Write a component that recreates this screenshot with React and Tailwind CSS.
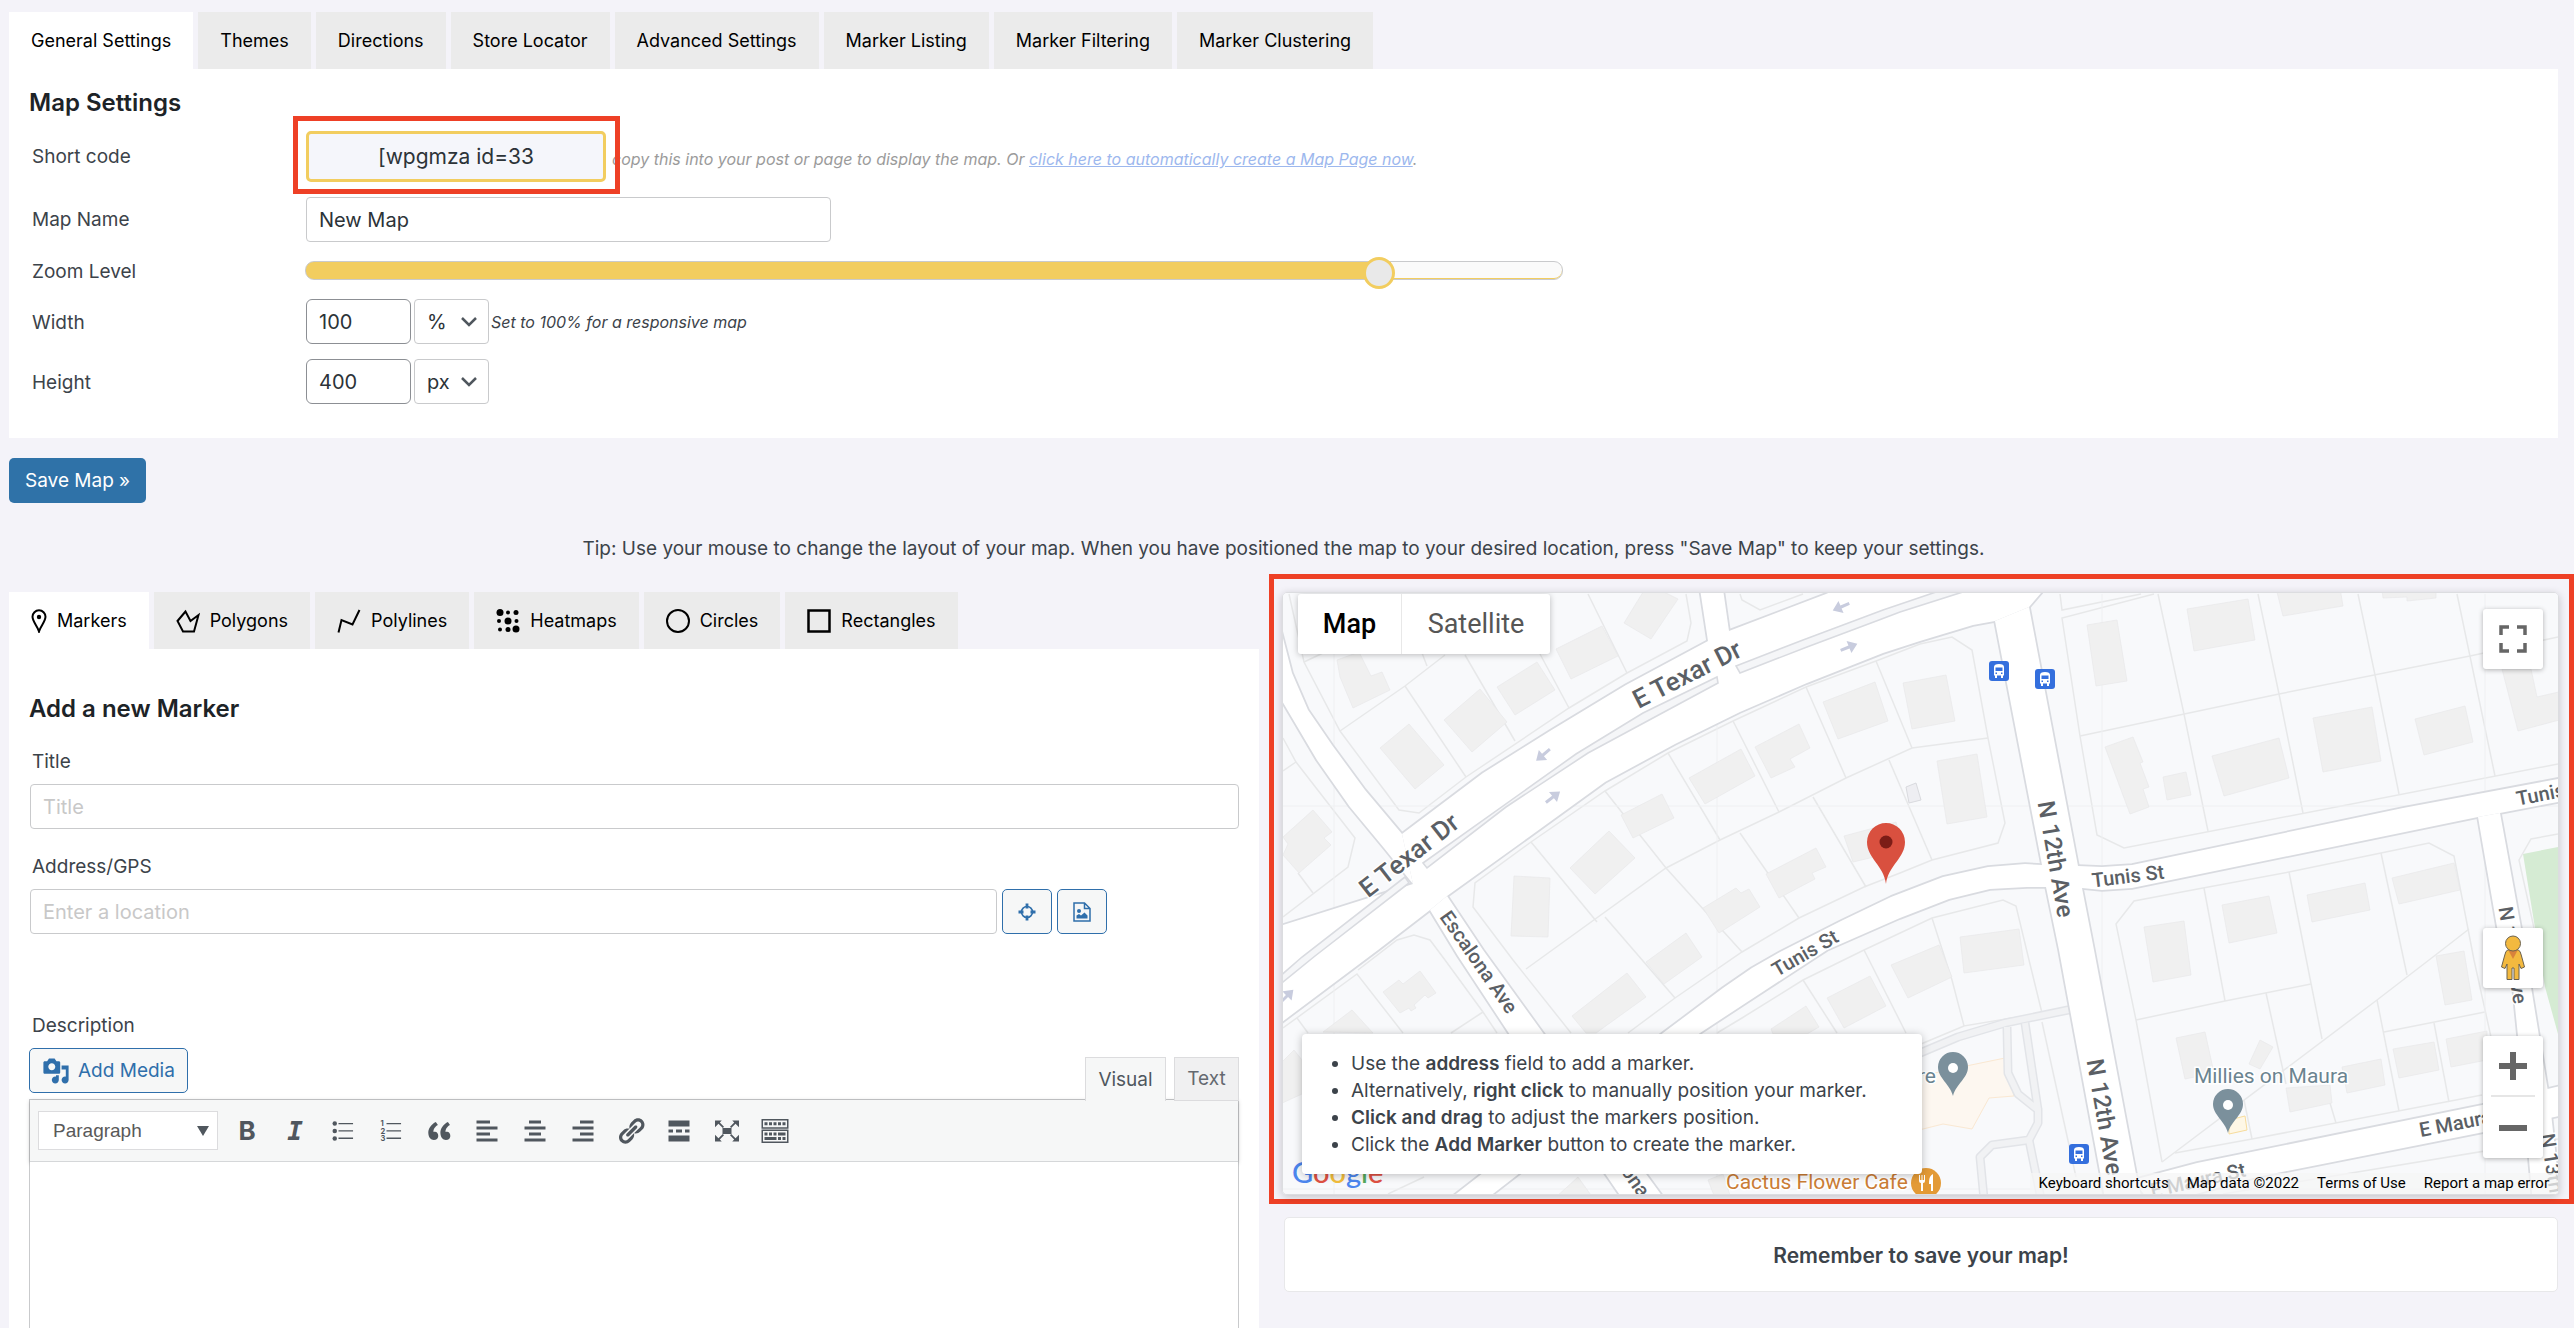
import React, { useState } from "react";

const settingsTabs = [
  "General Settings",
  "Themes",
  "Directions",
  "Store Locator",
  "Advanced Settings",
  "Marker Listing",
  "Marker Filtering",
  "Marker Clustering",
];

const inputClass =
  "h-[45px] rounded-[4px] border border-[#c9cacc] bg-white px-3 text-[20px] text-[#2c3338] outline-none placeholder:text-[#c8c8c8]";

const shapeIcons = {
  Markers: (
    <svg width="16" height="24" viewBox="0 0 16 24" fill="none" stroke="currentColor" strokeWidth="2">
      <path d="M8 22.5C6.5 17 1.5 12.5 1.5 7.8a6.5 6.5 0 0 1 13 0C14.500 12.500 9.500 17 8 22.500z" />
      <circle cx="8" cy="8" r="2.200" fill="currentColor" stroke="none" />
    </svg>
  ),
  Polygons: (
    <svg width="24" height="24" viewBox="0 0 24 24" fill="none" stroke="currentColor" strokeWidth="2">
      <path d="M9.500 2.500L1.500 12l5.500 10.500h11L22.500 6l-8 6z" />
    </svg>
  ),
  Polylines: (
    <svg width="24" height="24" viewBox="0 0 24 24" fill="none" stroke="currentColor" strokeWidth="2">
      <path d="M1.500 23.500L4.500 11l11 4.500L22.500 1" />
    </svg>
  ),
  Heatmaps: (
    <svg width="24" height="24" viewBox="0 0 24 24" fill="currentColor">
      <circle cx="4" cy="3.500" r="3.500" />
      <circle cx="12" cy="3.500" r="2" />
      <circle cx="20" cy="3.500" r="2.500" />
      <circle cx="3" cy="12" r="2" />
      <circle cx="12" cy="12" r="3.500" />
      <circle cx="20.500" cy="12" r="2" />
      <circle cx="4" cy="20.500" r="2" />
      <circle cx="12" cy="20.500" r="2.500" />
      <circle cx="20" cy="20" r="3.500" />
    </svg>
  ),
  Circles: (
    <svg width="24" height="24" viewBox="0 0 24 24" fill="none" stroke="currentColor" strokeWidth="2">
      <circle cx="12" cy="12" r="11" />
    </svg>
  ),
  Rectangles: (
    <svg width="24" height="24" viewBox="0 0 24 24" fill="none" stroke="currentColor" strokeWidth="2.500">
      <rect x="1.500" y="1.500" width="21" height="21" />
    </svg>
  ),
};

const toolbarButtons = [
  { label: "Bold", text: "B" },
  { label: "Italic", text: "I" },
  {
    label: "Bulleted list",
    icon: (
      <>
        <path d="M7 4.600h9.700v.9H7zM7 9.500h9.700v.9H7zM7 14.400h9.700v.9H7z" />
        <circle cx="4.500" cy="5" r="1.500" />
        <circle cx="4.500" cy="10" r="1.500" />
        <circle cx="4.500" cy="15" r="1.500" />
      </>
    ),
  },
  {
    label: "Numbered list",
    icon: (
      <>
        <path d="M7 4.600h9.700v.9H7zM7 9.500h9.700v.9H7zM7 14.400h9.700v.9H7z" />
        <g className="font-['Inter',sans-serif] text-[5px] font-bold">
          <text x="3" y="6.600">1</text>
          <text x="3" y="11.700">2</text>
          <text x="3" y="16.800">3</text>
        </g>
      </>
    ),
  },
  {
    label: "Blockquote",
    icon: (
      <path d="M9.490 13.220c0-.74-.2-1.380-.61-1.900-.62-.78-1.830-.88-2.530-.72-.29-1.650 1.110-3.750 2.920-4.650L7.880 4c-2.730 1.300-5.420 4.280-4.960 8.050C3.210 14.430 4.590 16 6.540 16c.85 0 1.560-.25 2.120-.75s.83-1.180.83-2.030zm8.050 0c0-.74-.2-1.380-.61-1.900-.63-.78-1.830-.88-2.530-.72-.29-1.650 1.110-3.750 2.920-4.650L15.930 4c-2.730 1.300-5.410 4.280-4.950 8.050.29 2.380 1.660 3.950 3.610 3.950.85 0 1.560-.25 2.120-.75s.83-1.180.83-2.030z" />
    ),
  },
  { label: "Align left", icon: <path d="M12 5V3H3v2h9zm5 4V7H3v2h14zm-5 4v-2H3v2h9zm5 4v-2H3v2h14z" /> },
  { label: "Align center", icon: <path d="M14 5V3H6v2h8zm3 4V7H3v2h14zm-3 4v-2H6v2h8zm3 4v-2H3v2h14z" /> },
  { label: "Align right", icon: <path d="M17 5V3H8v2h9zm0 4V7H3v2h14zm0 4v-2H8v2h9zm0 4v-2H3v2h14z" /> },
  {
    label: "Insert link",
    icon: (
      <path d="M17.740 2.760c1.680 1.690 1.680 4.410 0 6.100l-1.530 1.520c-1.120 1.120-2.700 1.470-4.140 1.090l2.620-2.610.76-.77.76-.76c.84-.84.84-2.200 0-3.040-.84-.85-2.200-.85-3.040 0l-.77.76-3.380 3.380c-.37-1.440-.02-3.020 1.100-4.140l1.520-1.530c1.690-1.680 4.420-1.680 6.100 0zM8.590 13.430l5.340-5.340c.42-.42.42-1.100 0-1.520-.44-.43-1.130-.39-1.530 0l-5.330 5.340c-.42.42-.42 1.100 0 1.520.44.43 1.130.39 1.520 0zm-.76 2.290l4.140-4.150c.38 1.440.03 3.020-1.090 4.140l-1.520 1.530c-1.690 1.680-4.410 1.680-6.100 0-1.680-1.680-1.680-4.420 0-6.100l1.530-1.520c1.120-1.120 2.700-1.470 4.140-1.100l-4.140 4.150c-.85.84-.85 2.200 0 3.050.84.84 2.200.84 3.040 0z" />
    ),
  },
  { label: "Read more", icon: <path d="M17 7V3H3v4h14zM6 11V9H3v2h3zm6 0V9H8v2h4zm5 0V9h-3v2h3zm0 6v-4H3v4h14z" /> },
  {
    label: "Fullscreen",
    icon: (
      <path d="M7 8h6v4H7zM2 3h4.500L5.200 4.300 8 7.200l-.8.8-2.900-2.900L2 7.500zM18 3h-4.500l1.300 1.300L12 7.200l.8.8 2.900-2.900L18 7.500zM2 17h4.500l-1.300-1.300L8 12.800l-.8-.8-2.900 2.900L2 12.500zM18 17h-4.500l1.300-1.300-2.800-2.900.8-.8 2.900 2.900 2.300-2.400z" />
    ),
  },
  {
    label: "Toolbar toggle",
    icon: (
      <path
        fillRule="evenodd"
        d="M1 2h18v6.500H1zM2 3v4.500h16V3zM1 9h18v9H1zM2 10v7h16v-7zM3 4.200h2v2H3zM6 4.200h2v2H6zM9 4.200h2v2H9zM12 4.200h2v2h-2zM15 4.200h2v2h-2zM3 11h2v2H3zM6 11h2v2H6zM9 11h2v2H9zM12 11h5v2h-5zM3 14h8v2H3zM12 14h2v2h-2zM15 14h2v2h-2z"
      />
    ),
  },
];

const roads = [
  // E Texar Dr
  "0,331 130,290 119,240 200,179 267,137 343,91 425,47 446,37 543,0 600,-25 770,-15 746,13 712,27 690,31 637,47 600,59 524,89 457,118 392,150 322,188 246,243 164,302 147,316 95,356 -5,431",
  "-5,100 34,166 67,213 101,254 130,290 119,240 82,196 49,151 25,116 9,79 -5,25",
  "417,-5 425,47 440,60 446,37 440,-5",
  // Escalona Ave
  "147,316 175,362 233,450 343,610 385,610 260,439 200,356 164,302",
  // N 12th Ave
  "712,27 759,271 763,293 776,356 823,610 860,610 853,580 811,356 799,294 795,272 746,13",
  // Tunis St
  "1285,183 1120,214 849,271 819,273 795,272 759,271 742,270 705,273 660,283 608,303 558,327 497,358 469,374 440,394 380,439 160,610 197,610 417,439 478,399 544,356 617,324 666,305 707,295 744,293 763,293 799,294 819,296 849,294 1195,223 1217,219 1285,206",
  // E Maura St
  "850,586 914,569 1199,511 1285,490 1285,520 1201,538 974,583 870,612",
  // N 13th Ave
  "1195,223 1214,333 1230,393 1235,442 1250,610 1278,610 1267,510 1256,442 1248,393 1238,334 1217,219",
];

const medians = [
  "140,269 293,160 360,119 434,83 435,89 305,159 223,213 144,274",
  "453,72 520,46 600,16 656,-3 683,-3 617,18 596,26 524,53 457,79",
  "122,283 19,363 -5,384 -5,392 32,362 126,289",
];

const parcels = [
  "6,0 21,68 57,137 116,216 136,219 183,183 286,114 344,79 404,47 408,29 403,0",
  "21,68 40,59",
  "57,137 122,92 162,61",
  "122,92 183,183",
  "139,59 144,72",
  "182,61 232,147",
  "257,60 286,114",
  "305,0 344,79",
  "0,144 13,168 72,244 65,273 0,323",
  "13,168 0,177",
  "15,279 30,299",
  "457,0 459,6 477,16 520,0",
  "288,439 230,366 190,313 192,289 248,248 322,197 385,159 450,127 523,93 593,67 637,50 669,43 689,56 705,144 722,229 715,249 649,266 617,279 581,293 516,324 459,358 392,404 345,439",
  "248,248 314,328",
  "243,375 383,274 437,246 496,218 563,184 629,154 705,144",
  "322,197 383,274 459,358",
  "385,159 437,246",
  "450,127 496,218",
  "523,93 563,184",
  "593,67 629,154",
  "530,203 583,293",
  "457,239 516,324",
  "322,323 392,404",
  "606,166 649,266",
  "75,376 114,346 131,341 147,346 162,366 200,418 214,439",
  "0,434 74,380 120,439",
  "200,418 168,439",
  "14,424 25,439",
  "434,439 459,424 520,386 581,356 649,324 720,306 733,312 746,366 759,419 681,432 669,386 649,324",
  "759,428 793,583",
  "581,356 623,439",
  "520,386 554,439",
  "681,432 638,450",
  "141,583 105,600",
  "777,0 779,16 858,0",
  "871,0 779,24 797,142 814,241 841,254 1275,170",
  "797,142 996,100 1187,62 1275,43",
  "875,0 901,120 925,237",
  "975,0 996,100 1020,219",
  "1075,0 1092,81 1116,200",
  "1174,0 1212,182",
  "879,568 853,426 833,330 851,307 920,294 1006,278 1098,259 1146,249 1171,262 1191,366 1208,443",
  "879,568 1094,406 1159,356 1186,335",
  "853,426 942,407 1028,390",
  "921,294 942,407",
  "1006,278 1039,445",
  "1098,259 1124,381",
  "983,399 1003,490",
  "1047,509 1053,529",
  "1094,406 1116,517",
  "1101,438 1202,418",
  "1151,429 1166,508",
  "892,559 969,545 1199,501",
  "961,506 969,545",
  "1275,240 1248,245 1236,266 1251,334",
  "940,600 1275,545",
];

const buildings = [
  "365,-10 395,5 368,45 341,29",
  "273,55 319,32 335,62 288,85",
  "214,93 254,68 272,96 232,121",
  "161,126 197,95 224,128 189,158",
  "97,154 126,130 161,171 132,195",
  "54,66 76,58 88,82 99,78 107,96 70,114 57,83",
  "0,243 30,216 49,238 41,244 48,251 16,279 0,261 5,250",
  "231,282 267,284 265,343 228,342",
  "287,274 326,237 352,264 312,300",
  "338,221 379,200 391,224 350,244",
  "406,184 458,155 472,182 422,210",
  "472,153 516,130 527,154 507,165 512,173 488,184",
  "540,108 592,88 605,127 555,145",
  "620,89 663,81 672,127 629,135",
  "654,167 694,160 704,223 664,230",
  "561,242 613,228 621,256 570,268",
  "483,280 533,254 543,273 529,279 532,285 496,304",
  "420,314 453,294 458,299 466,295 477,313 436,339",
  "363,368 403,339 419,363 381,390",
  "289,422 344,379 363,403 313,439 303,439",
  "100,398 116,386 120,390 137,377 153,399 145,404 142,401 131,411 133,414 128,417 126,414 117,419",
  "40,438 69,416 90,439",
  "488,435 523,412 536,433 524,440 490,440",
  "544,404 587,382 603,412 561,434",
  "608,371 656,351 669,383 625,404",
  "677,343 736,335 741,371 681,379",
  "804,31 834,26 844,87 813,92",
  "904,15 965,5 972,46 911,57",
  "993,-6 1057,-6 1060,12 1000,22",
  "1099,-4 1153,-4 1153,4 1124,7 1124,3 1100,4",
  "822,153 850,143 860,168 857,169 866,193 860,195 866,213 847,220",
  "880,183 903,178 908,201 884,206",
  "929,162 996,144 1006,184 941,202",
  "1030,124 1089,113 1098,167 1040,178",
  "1132,125 1182,112 1190,148 1141,161",
  "1219,75 1248,75 1254,103 1280,97 1280,125 1235,137",
  "861,333 901,327 908,381 870,388",
  "939,311 986,302 994,339 946,349",
  "1024,301 1082,289 1087,316 1029,328",
  "1109,284 1171,269 1177,296 1116,310",
  "1153,362 1181,357 1189,406 1162,411",
  "893,444 922,438 931,479 902,485",
  "977,446 990,453 977,475 966,470",
  "1003,494 1047,491 1049,509 1007,518",
  "1059,473 1098,465 1102,491 1064,499",
  "1110,455 1151,448 1156,476 1116,484",
  "1163,445 1204,437 1204,466 1168,473",
  "272,604 295,583 310,604",
  "425,586 440,580 448,604 432,604",
  "-3,470 11,456 19,466 19,500 -3,510",
];

const driveways = [
  "630,462 675,443 722,429 790,415",
  "724,433 725,479 735,500 755,516 755,529 746,546 709,551 697,563 701,605",
  "742,429 755,516",
  "746,546 758,605",
];

const arrows = [
  "translate(260 161) rotate(140)",
  "translate(270 203) rotate(-38)",
  "translate(558 13) rotate(157)",
  "translate(566 53) rotate(-22)",
  "translate(4 402) rotate(-45)",
];

const busStops = ["translate(706 67)", "translate(752 75)", "translate(786 550)"];

const roadLabels = [
  { text: "E Texar Dr", at: "translate(126 261) rotate(-38)", size: "text-[26px]" },
  { text: "E Texar Dr", at: "translate(404 80) rotate(-27)", size: "text-[26px]" },
  { text: "N 12th Ave", at: "translate(773 265) rotate(80)", size: "text-[24px]" },
  { text: "N 12th Ave", at: "translate(822 523) rotate(80)", size: "text-[24px]" },
  { text: "Tunis St", at: "translate(845 282) rotate(-7)", size: "text-[20px]" },
  { text: "Tunis St", at: "translate(522 359) rotate(-30)", size: "text-[20px]" },
  { text: "Tunis St", at: "translate(1269 198) rotate(-11)", size: "text-[20px]" },
  { text: "Escalona Ave", at: "translate(196 368) rotate(55)", size: "text-[20px]" },
  { text: "Escalona Ave", at: "translate(350 583) rotate(55)", size: "text-[20px]" },
  { text: "E Maura St", at: "translate(1184 527) rotate(-11)", size: "text-[20px]" },
  { text: "E Maura St", at: "translate(915 586) rotate(-13)", size: "text-[20px]" },
  { text: "N 13th Ave", at: "translate(1230 361) rotate(81)", size: "text-[20px]" },
  { text: "N 13th Ave", at: "translate(1272 588) rotate(81)", size: "text-[20px]" },
];

function PlacePin({ at }) {
  return (
    <g transform={at}>
      <path d="M0 0C-3-12-15-18-15-29a15 15 0 0 1 30 0C15-18 3-12 0 0z" fill="#7b909c" />
      <circle cy="-28" r="5" fill="#fff" />
    </g>
  );
}

function StreetMap() {
  return (
    <svg
      className="block h-full w-full font-['Roboto',sans-serif]"
      viewBox="0 -1 1275 601"
      preserveAspectRatio="xMidYMid slice"
      role="img"
      aria-label="Street map"
    >
      <rect y="-1" width="1275" height="601" fill="#f8f9fb" />
      <polygon points="1240,260 1285,251 1285,476 1262,393 1252,334" fill="#d5ebd3" />
      <polygon points="620,486 688,471 722,464 731,502 706,504 689,535 660,530 620,540" fill="#fdf7f0" stroke="#fae8d2" />
      {parcels.map((points) => (
        <polyline key={points} points={points} fill="none" stroke="#e7e8e9" strokeWidth="1.500" />
      ))}
      <path d="M51 0v600M434 0v600M819 0v600M1202 0v600M0 212h1275M0 595h1275" stroke="#eff0f2" />
      {buildings.map((points) => (
        <polygon key={points} points={points} fill="#f0f0f0" stroke="#e8e8e9" strokeWidth="0.700" />
      ))}
      <polygon points="623,193 633,189 638,206 626,209" fill="#eeeef2" stroke="#d9dade" />
      <polygon points="946,526 962,522 964,536 946,540" fill="#fef7e6" stroke="#f7dc9c" />

      <g fill="none" strokeLinejoin="round">
        {driveways.map((points) => (
          <polyline key={points} points={points} stroke="#e2e4e8" strokeWidth="9" />
        ))}
        {driveways.map((points) => (
          <polyline key={points} points={points} stroke="#f1f2f4" strokeWidth="6" />
        ))}
      </g>

      {/* road casing first, then the fills, so that the crossings merge */}
      {roads.map((points) => (
        <polygon key={points} points={points} fill="none" stroke="#d9dbe0" strokeWidth="3.500" strokeLinejoin="round" />
      ))}
      {roads.map((points) => (
        <polygon key={points} points={points} fill="#fff" />
      ))}
      {medians.map((points) => (
        <polygon key={points} points={points} fill="#f5f6f8" stroke="#d9dbe0" strokeWidth="1.600" />
      ))}
      {arrows.map((at) => (
        <path key={at} transform={at} d="M-9-1.500H0v-5L9 0 0 6.500v-5h-9z" fill="#c8ccde" />
      ))}

      {busStops.map((at) => (
        <g key={at} transform={at}>
          <rect width="20" height="20" rx="3" fill="#346fdd" />
          <path
            fillRule="evenodd"
            d="M5 6q0-3 5-3t5 3v8.500h-1V17h-2v-2.500H8V17H6v-2.500H5zM6.500 6.500v3.500h7V6.500zM6.500 11.500v1.500H8v-1.500zM12 11.500v1.500h1.500v-1.500z"
            fill="#fff"
          />
        </g>
      ))}

      <g fill="#5b5f65" fontWeight="500" textAnchor="middle" stroke="#fff" strokeWidth="3" paintOrder="stroke">
        {roadLabels.map(({ text, at, size }) => (
          <text key={at} transform={at} dy="0.350em" className={size}>
            {text}
          </text>
        ))}
      </g>

      <g className="text-[21px]" stroke="#fff" strokeWidth="3" paintOrder="stroke">
        <text x="988" y="489" textAnchor="middle" fill="#6b8490">
          Millies on Maura
        </text>
        <text x="653" y="489" textAnchor="end" fill="#6b8490">
          re
        </text>
        <text x="443" y="595" fill="#cb7d35">
          Cactus Flower Cafe
        </text>
      </g>
      <PlacePin at="translate(670 502)" />
      <PlacePin at="translate(945 539)" />
      <circle cx="643" cy="589" r="15" fill="#e39a36" />
      <path
        d="M636 581v6q0 2 2 2v8h2v-8q2 0 2-2v-6h-1v5h-1.500v-5h-1v5H637v-5zM650 580q-4 2-4 8v2h2v7h2z"
        fill="#fff"
      />

      <path d="M603 290C601 272 584 264 584 248a19 19 0 0 1 38 0C622 264 605 272 603 290z" fill="#d9503f" />
      <circle cx="603" cy="248" r="6.500" fill="#7c1d17" />
    </svg>
  );
}

function Chevron() {
  return (
    <svg
      className="pointer-events-none absolute top-[16px] right-3 text-[#50575e]"
      width="16"
      height="14"
      viewBox="0 0 16 14"
      fill="none"
      stroke="currentColor"
      strokeWidth="2.500"
    >
      <path d="M1 3l7 7 7-7" />
    </svg>
  );
}

function SizeField({ id, label, value, unit, children }) {
  return (
    <div className="flex items-center">
      <label htmlFor={id} className="w-[277px] pt-[2px] pl-[3px]">
        {label}
      </label>
      <input
        id={id}
        defaultValue={value}
        className="mr-[3px] h-[45px] w-[105px] rounded-[6px] border border-[#8c8f94] bg-white px-3 text-[20px] text-[#2c3338]"
      />
      <div className="relative">
        <select
          aria-label={`${label} unit`}
          defaultValue={unit}
          className="h-[45px] w-[75px] appearance-none rounded-[4px] border border-[#c9cacc] bg-white pl-3 text-[20px] text-[#2c3338]"
        >
          <option>px</option>
          <option>%</option>
        </select>
        <Chevron />
      </div>
      {children}
    </div>
  );
}

function MapSettings() {
  const [zoom, setZoom] = useState(19);
  const filled = (zoom / 22) * 100;

  return (
    <section className="mr-4 bg-white pt-[17px] pb-[34px] pl-5">
      <h2 className="h-[30px] text-[24px] leading-[33px] font-semibold text-[#1d2327]">Map Settings</h2>
      <div className="flex items-center">
        <label htmlFor="shortcode" className="w-[264px] pt-1 pl-[3px]">
          Short code
        </label>
        <div className="relative border-[5px] border-[#ee4026] pt-[10px] pr-[9px] pb-[7px] pl-2">
          <input
            id="shortcode"
            readOnly
            value="[wpgmza id=33"
            className="block h-[51px] w-[300px] rounded-[5px] border-3 border-[#f2cd5f] bg-[#f5f6fb] text-center text-[21px] text-[#2c3338] outline-none"
          />
        </div>
        <p className="-ml-2 pt-2 text-[16px] text-[#9b9b9b] italic">
          copy this into your post or page to display the map. Or{" "}
          <a href="#create" className="text-[#9db8ee] underline">
            click here to automatically create a Map Page now
          </a>
          .
        </p>
      </div>
      <div className="mt-[3px] flex items-center">
        <label htmlFor="map-name" className="w-[277px] pt-px pl-[3px]">
          Map Name
        </label>
        <input id="map-name" defaultValue="New Map" className={`${inputClass} w-[525px]`} />
      </div>
      <div className="mt-[19px] flex h-[19px] items-center pr-[50px]">
        <label htmlFor="zoom" className="w-[276px] shrink-0 pt-[2px] pl-[3px]">
          Zoom Level
        </label>
        <input
          id="zoom"
          type="range"
          min="0"
          max="22"
          value={zoom}
          onChange={(e) => setZoom(Number(e.target.value))}
          className="h-[19px] w-full max-w-[1258px] appearance-none rounded-[9px] border border-[#c9cacc] shadow-[inset_0_-1px_0_#f2cd5f] [&::-webkit-slider-thumb]:mt-[5px] [&::-webkit-slider-thumb]:h-8 [&::-webkit-slider-thumb]:w-8 [&::-webkit-slider-thumb]:appearance-none [&::-webkit-slider-thumb]:rounded-full [&::-webkit-slider-thumb]:border-3 [&::-webkit-slider-thumb]:border-[#f2cd5f] [&::-webkit-slider-thumb]:bg-[#e9e9e9]"
          style={{ background: `linear-gradient(to right, #f2cd5f ${filled}%, #fafafa ${filled}%)` }}
        />
      </div>
      <div className="mt-[19px]">
        <SizeField id="map-width" label="Width" value="100" unit="%">
          <em className="ml-[2px] pt-px text-[16px]">Set to 100% for a responsive map</em>
        </SizeField>
      </div>
      <div className="mt-[15px]">
        <SizeField id="map-height" label="Height" value="400" unit="px" />
      </div>
    </section>
  );
}

function DescriptionEditor() {
  return (
    <div className="flex grow flex-col">
      <div className="mt-2 flex items-end">
        <button
          type="button"
          className="mb-[6px] flex h-[45px] items-center gap-2 rounded-[5px] border border-[#2f6fab] bg-[#f6f7f7] px-3 text-[#2f6fab]"
        >
          <svg width="28" height="28" viewBox="0 0 20 20" fill="currentColor">
            <path d="M13 11V4c0-.55-.45-1-1-1h-1.670L9 1H5L3.670 3H2c-.55 0-1 .45-1 1v7c0 .55.45 1 1 1h10c.55 0 1-.45 1-1zM7 4.500c1.380 0 2.500 1.120 2.500 2.500S8.380 9.500 7 9.500 4.500 8.380 4.500 7 5.620 4.500 7 4.500zM14 6h5v10.500c0 1.380-1.120 2.500-2.500 2.500S14 17.880 14 16.500s1.120-2.500 2.500-2.500c.17 0 .34.02.5.05V9h-3V6zm-4 8.050V13h2v3.500c0 1.380-1.120 2.500-2.500 2.500S7 17.880 7 16.500 8.120 14 9.500 14c.17 0 .34.02.5.05z" />
          </svg>
          Add Media
        </button>
        <div className="relative -mb-[2px] ml-auto flex gap-2">
          <button type="button" className="h-[44px] w-[81px] border border-b-0 border-[#dcdcde] bg-[#f6f7f7] text-[#50575e]">
            Visual
          </button>
          <button type="button" className="h-[44px] w-[65px] border border-[#dcdcde] bg-[#f0f0f1] text-[#646970]">
            Text
          </button>
        </div>
      </div>
      <div className="flex grow flex-col border border-b-0 border-[#c9cacc]">
        <div className="flex items-center border-b border-[#d5d7d9] bg-[#f6f7f7] px-2 py-[11px] text-[#50575e] shadow-[0_1px_4px_rgba(0,0,0,0.25)]">
          <div className="relative mr-[14px]">
            <select
              aria-label="Block format"
              className="block h-[39px] w-[180px] appearance-none border border-[#dcdcde] bg-white pl-[14px] font-['Liberation_Sans',sans-serif] text-[19px] text-[#595959]"
            >
              <option>Paragraph</option>
            </select>
            <svg className="pointer-events-none absolute top-[15px] right-[9px]" width="12" height="10" viewBox="0 0 12 10" fill="currentColor">
              <path d="M0 0h12L6 10z" />
            </svg>
          </div>
          <div className="flex gap-[18px]">
            {toolbarButtons.map((b) => (
              <button key={b.label} type="button" aria-label={b.label} className="flex h-[30px] w-[30px] items-center justify-center">
                {b.text === "B" && <span className="text-[26px] leading-[30px] font-bold">B</span>}
                {b.text === "I" && (
                  <span className="font-['DejaVu_Sans_Mono',monospace] text-[26px] leading-[30px] font-bold italic">I</span>
                )}
                {b.icon && (
                  <svg width="30" height="30" viewBox="0 0 20 20" fill="currentColor">
                    {b.icon}
                  </svg>
                )}
              </button>
            ))}
          </div>
        </div>
        <textarea aria-label="Description" className="block w-full grow resize-none bg-white p-4 outline-none" />
      </div>
    </div>
  );
}

function MarkerPanel() {
  return (
    <div className="flex flex-col pt-[18px]">
      <div className="flex gap-[5px]">
        {Object.entries(shapeIcons).map(([name, icon], i) => (
          <button
            key={name}
            type="button"
            className={`flex h-[57px] items-center gap-[10px] px-[22px] text-[18px] text-black ${i === 0 ? "bg-white" : "bg-[#ebebeb]"}`}
          >
            {icon}
            {name}
          </button>
        ))}
      </div>
      <section className="flex grow flex-col bg-white px-5 pt-[44px]">
        <h2 className="text-[24px] leading-[32px] font-semibold text-[#1d2327]">Add a new Marker</h2>
        <label htmlFor="marker-title" className="mt-[23px] pl-[3px]">
          Title
        </label>
        <input id="marker-title" placeholder="Title" className={`${inputClass} mt-2 ml-px`} />
        <label htmlFor="marker-address" className="mt-6 pl-[3px]">
          Address/GPS
        </label>
        <div className="mt-2 ml-px flex gap-[5px]">
          <input id="marker-address" placeholder="Enter a location" className={`${inputClass} w-4/5`} />
          <button type="button" aria-label="Use my location" className="flex h-[45px] w-[50px] items-center justify-center rounded-[5px] border border-[#2f6fab] bg-[#f6f7f7] text-[#2f6fab]">
            <svg width="18" height="18" viewBox="0 0 18 18" fill="none" stroke="currentColor">
              <circle cx="9" cy="9" r="5.500" strokeWidth="1.600" />
              <path d="M9 0.500v5M9 12.500v5M.5 9h5M12.500 9h5" strokeWidth="2.800" />
            </svg>
          </button>
          <button type="button" aria-label="Pick an image" className="flex h-[45px] w-[50px] items-center justify-center rounded-[5px] border border-[#2f6fab] bg-[#f6f7f7] text-[#2f6fab]">
            <svg width="18" height="20" viewBox="0 0 18 20" fill="none" stroke="currentColor" strokeWidth="1.500">
              <path d="M1 1h10.500L17 6.500V19H1zM11.500 1v5.500H17" />
              <circle cx="6" cy="9" r="2" fill="currentColor" stroke="none" />
              <path d="M3.500 16.500v-3L6 12l2 1.500 3.500-3 3 3v3z" fill="currentColor" stroke="none" />
            </svg>
          </button>
        </div>
        <span className="mt-[78px] pl-[3px]">Description</span>
        <DescriptionEditor />
      </section>
    </div>
  );
}

function MapPreview() {
  return (
    <div>
      <div className="border-[5px] border-[#ee4026] pt-[13px] pr-[10px] pb-1 pl-2">
        <div className="relative h-[603px] overflow-hidden rounded-[5px] border border-[#dcdde0] font-['Roboto',sans-serif] shadow-[0_2px_8px_rgba(0,0,0,0.2)]">
          <StreetMap />

          <div className="absolute bottom-1 left-[9px] font-['Lato',sans-serif] text-[29px] leading-[36px] font-medium" aria-label="Google">
            <span className="text-[#4c86ee]">G</span>
            <span className="text-[#df5143]">o</span>
            <span className="text-[#f2bd3c]">o</span>
            <span className="text-[#4c86ee]">g</span>
            <span className="text-[#56a95b]">l</span>
            <span className="text-[#df5143]">e</span>
          </div>

          <div className="absolute top-[1px] left-[15px] flex rounded-[3px] bg-white shadow-[0_1px_6px_rgba(0,0,0,0.25)]">
            <button type="button" className="h-[60px] w-[104px] border-r border-[#e8e8e8] text-[27px] font-medium text-black">
              Map
            </button>
            <button type="button" className="h-[60px] w-[148px] text-[27px] text-[#565656]">
              Satellite
            </button>
          </div>

          <button
            type="button"
            aria-label="Toggle fullscreen view"
            className="absolute top-[16px] right-[15px] flex h-[60px] w-[60px] items-center justify-center rounded-[3px] bg-white shadow-[0_1px_5px_rgba(0,0,0,0.3)]"
          >
            <svg width="28" height="28" viewBox="0 0 28 28" fill="none" stroke="#666" strokeWidth="3.500">
              <path d="M2 10V2h8M18 2h8v8M26 18v8h-8M10 26H2v-8" />
            </svg>
          </button>
          <button
            type="button"
            aria-label="Street View"
            className="absolute right-[15px] bottom-[206px] flex h-[60px] w-[60px] items-center justify-center rounded-[3px] bg-white shadow-[0_1px_5px_rgba(0,0,0,0.3)]"
          >
            <svg width="26" height="46" viewBox="0 0 26 46" stroke="#6b6250" strokeWidth="1">
              <path d="M7.500 15h11q2 1 3 6l3 11-3.500 1.500L19 29v15.500h-5V33h-2v11.500H7V29l-2 4.500L1.500 32l3-11q1-5 3-6z" fill="#f3b93f" />
              <path d="M8.500 15.500h9L13 24z" fill="#d9823b" stroke="none" />
              <circle cx="13" cy="8.500" r="7.500" fill="#f3b93f" />
            </svg>
          </button>
          <div className="absolute right-[15px] bottom-[36px] flex w-[60px] flex-col rounded-[3px] bg-white px-2 shadow-[0_1px_5px_rgba(0,0,0,0.3)]">
            <button type="button" aria-label="Zoom in" className="flex h-[61px] items-center justify-center border-b-2 border-[#e6e6e6]">
              <svg width="28" height="28" viewBox="0 0 28 28" stroke="#666" strokeWidth="6">
                <path d="M14 0v28M0 14h28" />
              </svg>
            </button>
            <button type="button" aria-label="Zoom out" className="flex h-[61px] items-center justify-center">
              <svg width="28" height="28" viewBox="0 0 28 28" stroke="#666" strokeWidth="6">
                <path d="M0 14h28" />
              </svg>
            </button>
          </div>

          <div className="absolute right-0 bottom-0 flex h-[21px] items-center gap-[18px] bg-[#f5f5f5]/75 px-[9px] text-[15px] leading-[21px] text-black">
            <button type="button">Keyboard shortcuts</button>
            <span>Map data ©2022</span>
            <a href="#terms">Terms of Use</a>
            <a href="#report">Report a map error</a>
          </div>

          <ul className="absolute bottom-5 left-[19px] w-[620px] list-disc rounded-[4px] bg-white py-4 pl-[49px] font-['Inter',sans-serif] text-[19px] leading-[27px] shadow-[0_1px_8px_rgba(0,0,0,0.25)]">
            <li>
              Use the <b className="font-semibold">address</b> field to add a marker.
            </li>
            <li>
              Alternatively, <b className="font-semibold">right click</b> to manually position your marker.
            </li>
            <li>
              <b className="font-semibold">Click and drag</b> to adjust the markers position.
            </li>
            <li>
              Click the <b className="font-semibold">Add Marker</b> button to create the marker.
            </li>
          </ul>
        </div>
      </div>
      <p className="mt-[13px] mr-4 ml-[15px] rounded-[5px] border border-[#e8e8ea] bg-white pt-[23px] pb-[21px] text-center text-[21px] leading-[29px] font-semibold">
        Remember to save your map!
      </p>
    </div>
  );
}

export default function App() {
  return (
    <main className="flex min-h-screen flex-col bg-[#f4f3f9] pt-3 pl-[9px] font-['Inter',sans-serif] text-[19px] leading-[28px] text-[#3c434a]">
      <nav className="flex gap-[5px]">
        {settingsTabs.map((name, i) => (
          <a
            key={name}
            href="#settings"
            className={`flex h-[57px] items-center px-[22px] text-[18px] text-black ${i === 0 ? "bg-white" : "bg-[#ebebeb]"}`}
          >
            {name}
          </a>
        ))}
      </nav>
      <MapSettings />
      <button type="button" className="mt-5 h-[45px] self-start rounded-[5px] bg-[#2f72a8] px-4 text-white">
        Save Map »
      </button>
      <p className="mt-8 mr-4 text-center">
        Tip: Use your mouse to change the layout of your map. When you have positioned the map to your desired location, press "Save Map" to keep your settings.
      </p>
      <div className="mt-[11px] grid grow grid-cols-[1250fr_1305fr] gap-[10px]">
        <MarkerPanel />
        <MapPreview />
      </div>
    </main>
  );
}
